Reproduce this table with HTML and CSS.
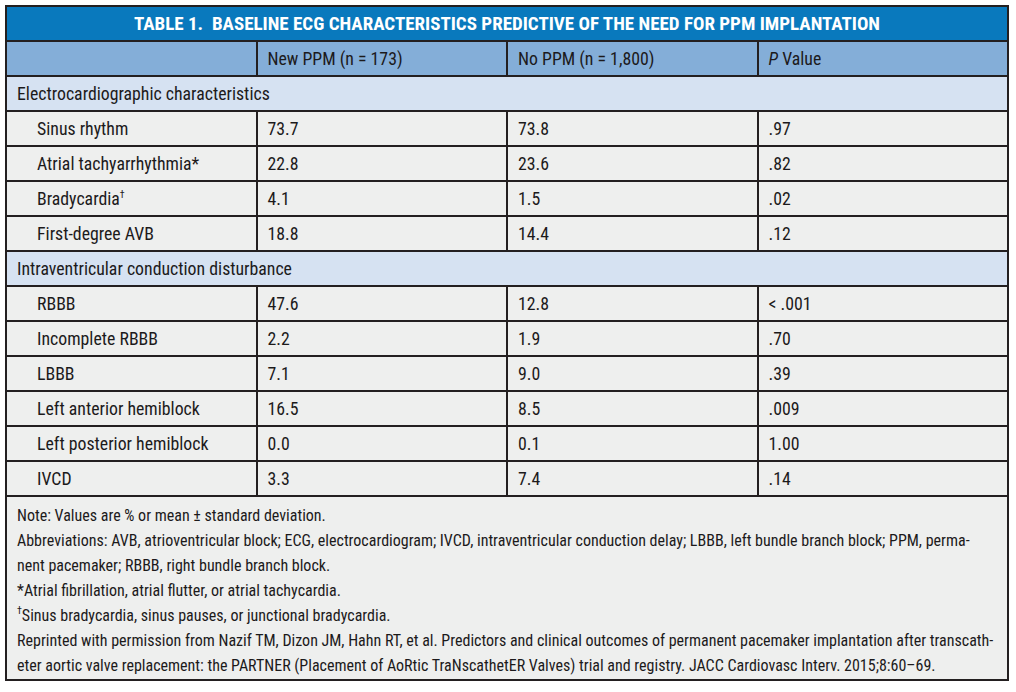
FILE: index.html
```html
<!DOCTYPE html>
<html>
<head>
<meta charset="utf-8">
<link rel="stylesheet" href="styles.css">
</head>
<body>
<div class="wrap">
<table class="ecg">
  <colgroup><col class="c"><col class="c"><col class="c"><col class="c"></colgroup>
  <thead>
    <tr><th class="title" colspan="4">TABLE 1.&nbsp; BASELINE ECG CHARACTERISTICS PREDICTIVE OF THE NEED FOR PPM IMPLANTATION</th></tr>
    <tr class="head"><td></td><td>New PPM (n = 173)</td><td>No PPM (n = 1,800)</td><td><i>P</i> Value</td></tr>
  </thead>
  <tbody>
    <tr class="sect"><td colspan="4">Electrocardiographic characteristics</td></tr>
    <tr><td class="lbl">Sinus rhythm</td><td>73.7</td><td>73.8</td><td>.97</td></tr>
    <tr><td class="lbl">Atrial tachyarrhythmia*</td><td>22.8</td><td>23.6</td><td>.82</td></tr>
    <tr><td class="lbl">Bradycardia<sup>†</sup></td><td>4.1</td><td>1.5</td><td>.02</td></tr>
    <tr><td class="lbl">First-degree AVB</td><td>18.8</td><td>14.4</td><td>.12</td></tr>
    <tr class="sect"><td colspan="4">Intraventricular conduction disturbance</td></tr>
    <tr><td class="lbl">RBBB</td><td>47.6</td><td>12.8</td><td>&lt; .001</td></tr>
    <tr><td class="lbl">Incomplete RBBB</td><td>2.2</td><td>1.9</td><td>.70</td></tr>
    <tr><td class="lbl">LBBB</td><td>7.1</td><td>9.0</td><td>.39</td></tr>
    <tr><td class="lbl">Left anterior hemiblock</td><td>16.5</td><td>8.5</td><td>.009</td></tr>
    <tr><td class="lbl">Left posterior hemiblock</td><td>0.0</td><td>0.1</td><td>1.00</td></tr>
    <tr><td class="lbl">IVCD</td><td>3.3</td><td>7.4</td><td>.14</td></tr>
  </tbody>
  <tfoot>
    <tr class="notes"><td colspan="4">
      <div class="line">Note: Values are % or mean ± standard deviation.</div>
      <div class="line">Abbreviations: AVB, atrioventricular block; ECG, electrocardiogram; IVCD, intraventricular conduction delay; LBBB, left bundle branch block; PPM, perma-</div>
      <div class="line">nent pacemaker; RBBB, right bundle branch block.</div>
      <div class="line">*Atrial fibrillation, atrial flutter, or atrial tachycardia.</div>
      <div class="line"><sup>†</sup>Sinus bradycardia, sinus pauses, or junctional bradycardia.</div>
      <div class="line">Reprinted with permission from Nazif TM, Dizon JM, Hahn RT, et al. Predictors and clinical outcomes of permanent pacemaker implantation after transcath-</div>
      <div class="line">eter aortic valve replacement: the PARTNER (Placement of AoRtic TraNscathetER Valves) trial and registry. JACC Cardiovasc Interv. 2015;8:60–69.</div>
    </td></tr>
  </tfoot>
</table>
</div>
</body>
</html>
```

FILE: styles.css
```css
html, body {
  margin: 0;
  padding: 0;
  background: #ffffff;
}
.wrap {
  padding: 5px 0 0 5px;
}
.ecg {
  width: 1004px;
  border-collapse: collapse;
  table-layout: fixed;
  font-family: Roboto, "Liberation Sans", sans-serif;
  font-stretch: 75%;
  font-weight: 450;
  font-size: 17.8px;
  color: #1c1a1b;
  border: 2px solid #231f20;
}
.ecg col.c {
  width: 25%;
}
.ecg td, .ecg th {
  border: 2px solid #231f20;
  height: 33px;
  padding: 0 0 0 10px;
  text-align: left;
  vertical-align: middle;
  background: #eeefee;
  white-space: nowrap;
}
.ecg th.title {
  background: #0979bd;
  color: #ffffff;
  font-weight: bold;
  font-size: 19px;
  text-align: center;
  padding: 0;
}
.ecg tr.head td {
  background: #84aed8;
}
.ecg tr.sect td {
  background: #d6e2f2;
}
.ecg td.lbl {
  padding-left: 30px;
}
.ecg sup {
  font-size: 10px;
  line-height: 0;
  vertical-align: 7px;
}
.ecg tr.notes td {
  height: auto;
  padding: 6px 0 1px 10px;
  font-size: 16px;
  font-weight: 400;
}
.notes .line {
  line-height: 25px;
}
```
